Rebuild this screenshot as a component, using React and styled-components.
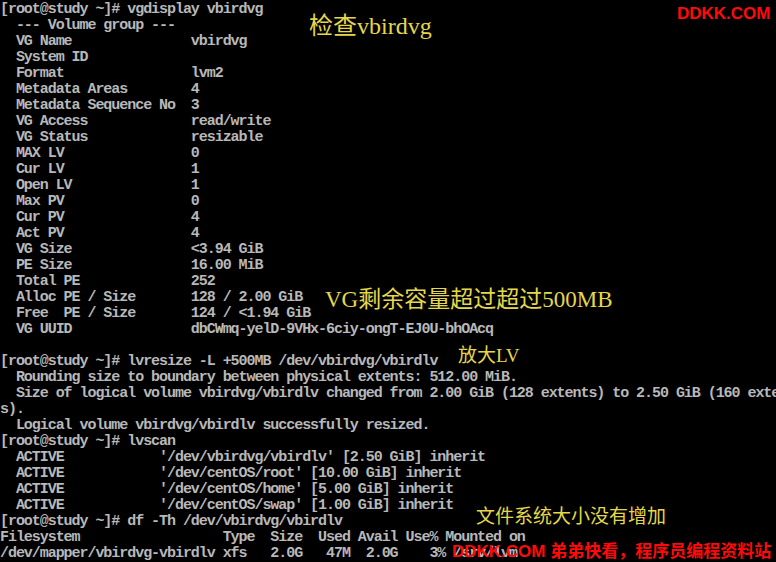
import styled, { createGlobalStyle } from "styled-components";

const Global = createGlobalStyle`
html, body {
    margin:0;
    background:#000;
}
`;

const Screen = styled.div`
position:relative;
width:776px;
height:562px;
background:#000;
overflow:hidden;
`;

const Terminal = styled.div`
padding-top:2px;
font-family:"Liberation Mono", "DejaVu Sans Mono", monospace;
font-size:15px;
font-weight:bold;
letter-spacing:-1.05px;
line-height:16px;
color:#b8b8b8;
`;

const Line = styled.div`
height:16px;
white-space:pre;
overflow:hidden;
`;

const Note = styled.div`
position:absolute;
left:${p => p.x}px;
top:${p => p.y}px;
font-family:"Liberation Serif", "Noto Sans CJK SC", serif;
font-size:${p => p.size}px;
line-height:1;
color:#e4d84a;
white-space:nowrap;
`;

const Mark = styled.div`
position:absolute;
left:${p => p.x}px;
top:${p => p.y}px;
font-family:"Liberation Sans", "Noto Sans CJK SC", sans-serif;
font-weight:bold;
font-size:17px;
line-height:1;
color:#ff0a0a;
white-space:nowrap;
`;

const prompt = "[root@study ~]# ";
const row = (label, value) => "  " + label.padEnd(22) + value;
const active = path => "  ACTIVE".padEnd(20) + path;

const lines = [
    prompt + "vgdisplay vbirdvg",
    "  --- Volume group ---",
    row("VG Name", "vbirdvg"),
    row("System ID", ""),
    row("Format", "lvm2"),
    row("Metadata Areas", "4"),
    row("Metadata Sequence No", "3"),
    row("VG Access", "read/write"),
    row("VG Status", "resizable"),
    row("MAX LV", "0"),
    row("Cur LV", "1"),
    row("Open LV", "1"),
    row("Max PV", "0"),
    row("Cur PV", "4"),
    row("Act PV", "4"),
    row("VG Size", "<3.94 GiB"),
    row("PE Size", "16.00 MiB"),
    row("Total PE", "252"),
    row("Alloc PE / Size", "128 / 2.00 GiB"),
    row("Free  PE / Size", "124 / <1.94 GiB"),
    row("VG UUID", "dbCWmq-yelD-9VHx-6ciy-ongT-EJ0U-bhOAcq"),
    "",
    prompt + "lvresize -L +500MB /dev/vbirdvg/vbirdlv",
    "  Rounding size to boundary between physical extents: 512.00 MiB.",
    "  Size of logical volume vbirdvg/vbirdlv changed from 2.00 GiB (128 extents) to 2.50 GiB (160 extent",
    "s).",
    "  Logical volume vbirdvg/vbirdlv successfully resized.",
    prompt + "lvscan",
    active("'/dev/vbirdvg/vbirdlv' [2.50 GiB] inherit"),
    active("'/dev/centOS/root' [10.00 GiB] inherit"),
    active("'/dev/centOS/home' [5.00 GiB] inherit"),
    active("'/dev/centOS/swap' [1.00 GiB] inherit"),
    prompt + "df -Th /dev/vbirdvg/vbirdlv",
    "Filesystem                  Type  Size  Used Avail Use% Mounted on",
    "/dev/mapper/vbirdvg-vbirdlv xfs   2.0G   47M  2.0G    3% /srv/lvm",
];

export default function App() {
    return (
        <Screen>
            <Global />
            <Terminal>
                {lines.map((text, i) => (
                    <Line key={i}>{text}</Line>
                ))}
            </Terminal>
            <Note x={309} y={14} size={24}>检查vbirdvg</Note>
            <Note x={325} y={288} size={23}>VG剩余容量超过超过500MB</Note>
            <Note x={458} y={346} size={19}>放大LV</Note>
            <Note x={476} y={507} size={19}>文件系统大小没有增加</Note>
            <Mark x={677} y={5}>DDKK.COM</Mark>
            <Mark x={452} y={543}>DDKK.COM 弟弟快看，程序员编程资料站</Mark>
        </Screen>
    );
}
